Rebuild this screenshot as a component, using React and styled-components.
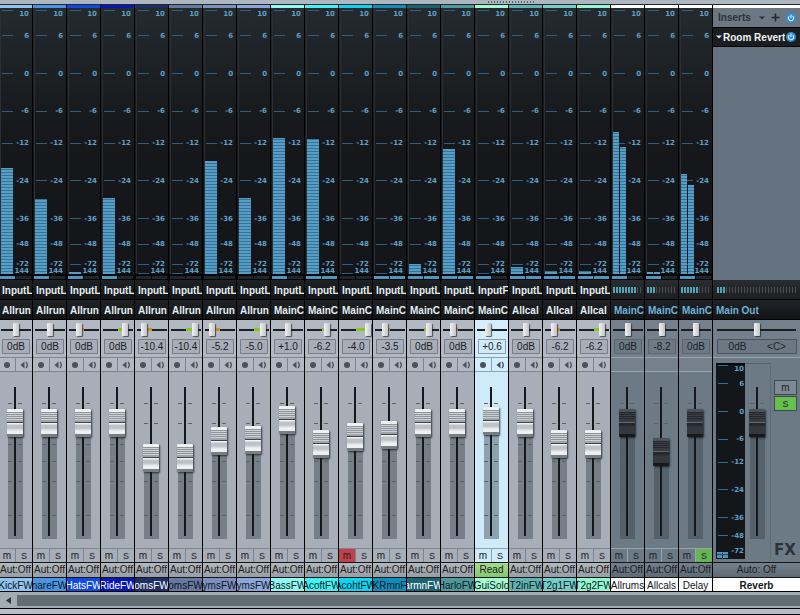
import { useState } from "react";
import styled, { createGlobalStyle, css } from "styled-components";

const METER_MARKS = [
  ["10", 2, 8],
  ["6", 27, 30],
  ["0", 65, 68],
  ["-6", 103, 105],
  ["-12", 135, 137],
  ["-24", 172, 175],
  ["-36", 210, 213],
  ["-48", 236, 238],
  ["-72", 256, 258],
  ["144", 265, 265],
];

const MASTER_MARKS = [
  ["10", 2, 8],
  ["6", 20, 23],
  ["0", 48, 51],
  ["-6", 76, 78],
  ["-12", 99, 101],
  ["-24", 126, 129],
  ["-36", 154, 157],
  ["-48", 172, 175],
  ["-72", 189, 190],
];

// bars: meter heights in pixels, io: lit halves of the input indicator,
// level: fader travel from the bottom, pan: -12 (left) to 12 (right)
const CHANNELS = [
  { name: "KickFW", color: "#93c3f0", input: "InputL", output: "Allrun", db: "0dB", level: 102, pan: 0, bars: [106], io: 1 },
  { name: "nareFW", color: "#4694e6", input: "InputL", output: "Allrun", db: "0dB", level: 102, pan: 0, bars: [75], io: 1 },
  { name: "HatsFW", color: "#0f49e6", ink: "#fff", input: "InputL", output: "Allrun", db: "0dB", level: 102, pan: -5, bars: [2], io: 1 },
  { name: "RideFW", color: "#0717b4", ink: "#fff", input: "InputL", output: "Allrun", db: "0dB", level: 102, pan: 7, bars: [76], io: 1 },
  { name: "omsFW", color: "#1d2f66", ink: "#fff", input: "InputL", output: "Allrun", db: "-10.4", level: 67, pan: -8, bars: [], io: 0 },
  { name: "omsFW", color: "#66799f", input: "InputL", output: "Allrun", db: "-10.4", level: 67, pan: 9, bars: [], io: 0 },
  { name: "ymsFW", color: "#7b90bf", input: "InputL", output: "Allrun", db: "-5.2", level: 84, pan: -8, bars: [113], io: 0 },
  { name: "ymsFW", color: "#8ba6d8", input: "InputL", output: "Allrun", db: "-5.0", level: 85, pan: 9, bars: [76], io: 0 },
  { name: "BassFW", color: "#8dfaf4", input: "InputL", output: "MainC", db: "+1.0", level: 105, pan: 0, bars: [136], io: 1 },
  { name: "AcoftFW", color: "#3cf4f6", input: "InputL", output: "MainC", db: "-6.2", level: 81, pan: 5, bars: [135], io: 2 },
  { name: "AcohtFW", color: "#0bd5f2", input: "InputL", output: "MainC", db: "-4.0", level: 88, pan: 12, bars: [], io: 0, muted: true },
  { name: "KRmnF", color: "#0c8fbd", input: "InputL", output: "MainC", db: "-3.5", level: 90, pan: -5, bars: [], io: 2 },
  { name: "armnFW", color: "#1c6473", ink: "#fff", input: "InputL", output: "MainC", db: "0dB", level: 102, pan: 5, bars: [10], io: 2 },
  { name: "HarloFW", color: "#4d9a9e", input: "InputL", output: "MainC", db: "0dB", level: 102, pan: -5, bars: [125], io: 2 },
  { name: "GuiSolo", color: "#a3fad0", input: "InputF", output: "MainC", db: "+0.6", level: 104, pan: -4, bars: [], io: 1, selected: true },
  { name: "IT2inFW", color: "#5fb3b1", input: "InputL", output: "Allcal", db: "0dB", level: 102, pan: 0, bars: [7], io: 2 },
  { name: "T2g1FW", color: "#73cfc8", input: "InputL", output: "Allcal", db: "-6.2", level: 81, pan: -6, bars: [3], io: 2 },
  { name: "T2g2FW", color: "#92f7d3", input: "InputL", output: "Allcal", db: "-6.2", level: 81, pan: 8, bars: [3], io: 2 },
  { name: "Allrums", color: "#ffffff", fx: true, leds: 8, output: "MainC", db: "0dB", level: 102, pan: 0, bars: [142, 127], io: 1 },
  { name: "Allcals", color: "#ffffff", fx: true, leds: 3, output: "MainC", db: "-8.2", level: 73, pan: 0, bars: [2, 2], io: 1 },
  { name: "Delay", color: "#ffffff", fx: true, leds: 6, output: "MainC", db: "0dB", level: 102, pan: 0, bars: [100, 89], io: 1, soloed: true },
];

const FADER_TICKS = [16, 36, 57, 74, 94, 128];

const tickStops = FADER_TICKS.map(
  (y) => `transparent ${y}px, #59636b ${y}px, #59636b ${y + 1}px, transparent ${y + 1}px`
).join(", ");
const tickImage = `linear-gradient(to bottom, ${tickStops})`;

const Meter = ({ bars, io }) => {
  const width = bars.length > 1 ? 6 : 12;

  return (
    <MeterSvg viewBox="0 0 33 272" width="33" height="272" aria-hidden="true">
      <defs>
        <linearGradient id="glass" x1="0" y1="0" x2="0" y2="1">
          <stop offset="0" stopColor="#242a2e" />
          <stop offset="0.45" stopColor="#16181b" />
          <stop offset="1" stopColor="#131518" />
        </linearGradient>
        <pattern id="segments" width="33" height="3" patternUnits="userSpaceOnUse">
          <rect width="33" height="3" fill="#589dc6" />
          <rect y="2" width="33" height="1" fill="#32739a" />
        </pattern>
      </defs>
      <rect width="33" height="266" fill="url(#glass)" />
      <rect x="1" width="1" height="266" fill="#2b2f33" />
      {METER_MARKS.map(([label, tick, text]) => (
        <g key={label}>
          <rect x="3" y={tick} width="11" height="1" fill="#2f5f80" />
          <MarkText x="30" y={text}>
            {label}
          </MarkText>
        </g>
      ))}
      {bars.map((height, i) => (
        <rect
          key={i}
          x={2 + i * 7}
          y={266 - height}
          width={width}
          height={height}
          fill="url(#segments)"
        />
      ))}
      <rect y="266" width="33" height="6" fill="#050607" />
      <rect x="1" y="268" width="15" height="3" fill={io > 0 ? "#4f95bd" : "#20262b"} />
      <rect x="17" y="268" width="15" height="3" fill={io > 1 ? "#4f95bd" : "#20262b"} />
    </MeterSvg>
  );
};

const MasterMeter = () => (
  <svg viewBox="0 0 29 196" width="29" height="196" aria-hidden="true">
    <rect width="29" height="196" fill="#14171a" />
    <rect width="29" height="2" fill="#050607" />
    {MASTER_MARKS.map(([label, tick, text]) => (
      <g key={label}>
        <rect x="2" y={tick} width="10" height="1" fill="#2f6f96" />
        <MarkText x="28" y={text}>
          {label}
        </MarkText>
      </g>
    ))}
    <rect x="1" y="189" width="5" height="6" fill="#4f95bd" />
    <rect x="7" y="189" width="5" height="6" fill="#4f95bd" />
    <rect x="1" y="191" width="11" height="1" fill="#1b4a66" />
  </svg>
);

const Leds = ({ count, lit }) => (
  <svg width={count * 3} height="6" aria-hidden="true">
    {Array.from({ length: count }, (_, i) => (
      <rect
        key={i}
        x={i * 3}
        width={i < lit ? 2 : 1}
        height="6"
        fill={i < lit ? "#4fa5b8" : "#4b4f52"}
      />
    ))}
  </svg>
);

const SpeakerIcon = () => (
  <svg width="9" height="8" viewBox="0 0 9 8" aria-hidden="true">
    <path d="M0.5 4 L4.5 0.5 V7.5 Z" fill="#4a515a" />
    <path d="M6 1 Q8.6 4 6 7" fill="none" stroke="#4a515a" strokeWidth="1.3" />
  </svg>
);

const PowerIcon = () => (
  <svg width="10" height="10" viewBox="0 0 10 10" aria-hidden="true">
    <circle cx="5" cy="5" r="5" fill="#2f8ed2" />
    <path d="M3.2 3.2 A2.6 2.6 0 1 0 6.8 3.2" fill="none" stroke="#d6efff" strokeWidth="1.1" />
    <path d="M5 1.4 V5" stroke="#d6efff" strokeWidth="1.1" />
  </svg>
);

const ArrowIcon = ({ color }) => (
  <ArrowSvg width="6" height="4" viewBox="0 0 6 4" aria-hidden="true">
    <path d="M0 0.5 H6 L3 3.5 Z" fill={color} />
  </ArrowSvg>
);

const Channel = ({ channel }) => {
  const { name, color, ink, input, output, db, bars, io, fx, leds, selected } = channel;
  const [level, setLevel] = useState(channel.level);
  const [pan, setPan] = useState(channel.pan);
  const [muted, setMuted] = useState(!!channel.muted);
  const [soloed, setSoloed] = useState(!!channel.soloed);

  return (
    <Strip $fx={fx} $selected={selected}>
      <ColorBar $color={color} />
      <Meter bars={bars} io={io} />
      {fx ? (
        <LedRow>
          <Leds count={10} lit={leds} />
        </LedRow>
      ) : (
        <RouteButton type="button">
          <span>{input}</span>
        </RouteButton>
      )}
      <RouteButton type="button" $fx={fx}>
        <span>{output}</span>
      </RouteButton>
      <PanRow>
        <PanSlider
          type="range"
          min="-12"
          max="12"
          value={pan}
          $pan={pan}
          onChange={(e) => setPan(Number(e.target.value))}
          aria-label={`${name} pan`}
        />
      </PanRow>
      <GainRow>
        <GainBox defaultValue={db} aria-label={`${name} gain`} />
      </GainRow>
      <ArmRow>
        {!fx && (
          <>
            <CellButton type="button" aria-label={`Record ${name}`}>
              <RecordDot />
            </CellButton>
            <CellButton type="button" aria-label={`Monitor ${name}`}>
              <SpeakerIcon />
            </CellButton>
          </>
        )}
      </ArmRow>
      <FaderArea>
        <Fader
          type="range"
          min="0"
          max="124"
          value={level}
          $level={level}
          $dark={fx}
          onChange={(e) => setLevel(Number(e.target.value))}
          aria-label={`${name} level`}
        />
      </FaderArea>
      <MuteSoloRow>
        <CellButton type="button" $on={muted && "#c3414a"} onClick={() => setMuted(!muted)}>
          m
        </CellButton>
        <CellButton
          type="button"
          $solo
          $on={soloed && "#65b552"}
          onClick={() => setSoloed(!soloed)}
        >
          S
        </CellButton>
      </MuteSoloRow>
      <AutoButton type="button" $fx={fx} $active={selected}>
        {selected ? "Read" : "Aut:Off"}
      </AutoButton>
      <NameTag $color={color} $ink={ink}>
        <span>{name}</span>
      </NameTag>
    </Strip>
  );
};

const Master = () => {
  const [level, setLevel] = useState(102);
  const [pan, setPan] = useState(0);

  return (
    <MasterPanel>
      <ColorBar $color="#ffffff" />
      <Inserts>
        <InsertsHeader>
          <span>Inserts</span>
          <ArrowIcon color="#2b3138" />
          <IconButton type="button" aria-label="Add insert">
            <svg width="9" height="9" viewBox="0 0 9 9" aria-hidden="true">
              <path d="M4.5 0.5 V8.5 M0.5 4.5 H8.5" stroke="#22282e" strokeWidth="1.6" />
            </svg>
          </IconButton>
          <IconButton type="button" aria-label="Toggle inserts">
            <PowerIcon />
          </IconButton>
        </InsertsHeader>
        <InsertItem>
          <ArrowIcon color="#e4e8eb" />
          <span>Room Revert</span>
          <IconButton type="button" aria-label="Toggle Room Revert">
            <PowerIcon />
          </IconButton>
        </InsertItem>
      </Inserts>
      <LedRow $wide>
        <Leds count={27} lit={3} />
      </LedRow>
      <RouteButton type="button" $fx>
        <span>Main Out</span>
      </RouteButton>
      <PanRow $wide>
        <PanSlider
          type="range"
          min="-12"
          max="12"
          value={pan}
          $pan={pan}
          $wide
          onChange={(e) => setPan(Number(e.target.value))}
          aria-label="Reverb pan"
        />
      </PanRow>
      <GainRow>
        <MasterGain>
          <input defaultValue="0dB" aria-label="Reverb gain" />
          <input defaultValue="&lt;C&gt;" aria-label="Reverb pan position" />
        </MasterGain>
      </GainRow>
      <MasterBody>
        <MasterMeter />
        <MasterFaderWell>
          <Fader
            type="range"
            min="0"
            max="124"
            value={level}
            $level={level}
            $dark
            onChange={(e) => setLevel(Number(e.target.value))}
            aria-label="Reverb level"
          />
        </MasterFaderWell>
        <MasterSide>
          <SideButton type="button">m</SideButton>
          <SideButton type="button" $on>
            S
          </SideButton>
          <FxMark>FX</FxMark>
        </MasterSide>
      </MasterBody>
      <AutoButton type="button" $fx>
        Auto: Off
      </AutoButton>
      <NameTag $color="#ffffff" $bold>
        <span>Reverb</span>
      </NameTag>
    </MasterPanel>
  );
};

const App = () => (
  <>
    <GlobalStyle />
    <TopEdge>
      <Grip />
    </TopEdge>
    <Console>
      {CHANNELS.map((channel, i) => (
        <Channel key={i} channel={channel} />
      ))}
      <Master />
    </Console>
    <ScrollBar>
      <ScrollArrow type="button" aria-label="Scroll left">
        <svg width="5" height="7" viewBox="0 0 5 7" aria-hidden="true">
          <path d="M5 0 V7 L0 3.5 Z" fill="#33383d" />
        </svg>
      </ScrollArrow>
      <ScrollThumb />
    </ScrollBar>
    <BottomEdge />
  </>
);

export default App;

const GlobalStyle = createGlobalStyle`
  * {
    box-sizing: border-box;
  }

  body {
    margin: 0;
    overflow: hidden;
    background: #08090a;
    font-family: "Liberation Sans", Arial, sans-serif;
    font-size: 10px;
    color: #1c2024;
  }

  button,
  input {
    margin: 0;
    padding: 0;
    border: 0;
    border-radius: 0;
    background: none;
    font: inherit;
    color: inherit;
  }
`;

const TopEdge = styled.div`
  display: flex;
  justify-content: center;
  height: 5px;
  padding: 1px 0 0 224px;
  background: #aeb6bf;
  border-bottom: 1px solid #23282d;
`;

const Grip = styled.div`
  width: 48px;
  height: 2px;
  background: repeating-linear-gradient(to right, #59616a 0 1px, transparent 1px 3px);
`;

const Console = styled.main`
  display: flex;
  margin-left: -1px;
`;

const Strip = styled.section`
  --body: #a7aeb8;
  --line: #7d858e;
  --light: #b2b8c1;
  display: flex;
  flex: none;
  flex-direction: column;
  width: 34px;
  border-right: 1px solid #000;
  background: var(--body);

  ${({ $fx }) =>
    $fx &&
    css`
      --body: #6c7a86;
      --line: #98a5b0;
      --light: #74818c;
    `}

  ${({ $selected }) =>
    $selected &&
    css`
      --body: #cfebfa;
      --line: #8ba4b1;
      --light: #d2eefc;
    `}
`;

const ColorBar = styled.div`
  height: 3px;
  background: ${({ $color }) => $color};
`;

const MeterSvg = styled.svg`
  display: block;
`;

const ArrowSvg = styled.svg`
  flex: none;
`;

const MarkText = styled.text`
  font: bold 7px "DejaVu Sans", Verdana, sans-serif;
  text-anchor: end;
  fill: #5f9fc6;
`;

const LedRow = styled.div`
  display: flex;
  align-items: center;
  height: 20px;
  padding-left: ${({ $wide }) => ($wide ? 4 : 2)}px;
  overflow: hidden;
  background: linear-gradient(#2a2d30, #1c1e20);
  border-bottom: 1px solid #000;
`;

const RouteButton = styled.button`
  height: 20px;
  padding: 1px 0 0 3px;
  background: linear-gradient(#202326, #121415);
  border-bottom: 1px solid #000;
  color: ${({ $fx }) => ($fx ? "#6fb2d6" : "#e3eef2")};
  font-weight: bold;
  text-align: left;

  span {
    display: block;
    overflow: hidden;
    white-space: nowrap;
  }
`;

const PanRow = styled.div`
  display: flex;
  align-items: center;
  height: 19px;
  padding: 0 ${({ $wide }) => ($wide ? "4px 0 4px" : "1px 0 2px")};
  background: var(--light);
`;

const panFill = ({ $pan }) => {
  if ($pan === 0) return "transparent 0 0";
  const edge = 50 + ($pan / 12) * 40;
  return $pan > 0
    ? `transparent 50%, #86c81c 50% ${edge}%, transparent ${edge}%`
    : `transparent ${edge}%, #c8912a ${edge}% 50%, transparent 50%`;
};

const PanSlider = styled.input`
  appearance: none;
  width: ${({ $wide }) => ($wide ? "100%" : "30px")};
  height: 14px;
  background:
    linear-gradient(to right, ${panFill}) center / 100% 3px no-repeat,
    linear-gradient(#1c1f22, #1c1f22) center / 100% 2px no-repeat;

  &::-webkit-slider-thumb {
    appearance: none;
    width: 6px;
    height: 13px;
    border-radius: 1px;
    background: linear-gradient(to right, #f1f2f3, #c0c4c8);
    box-shadow: 1px 1px 1px rgba(30, 34, 40, 0.7);
  }
`;

const GainRow = styled.div`
  height: 19px;
  padding: 0 2px 0 3px;
  background: var(--light);
  border-bottom: 1px solid var(--line);
`;

const GainBox = styled.input`
  display: block;
  width: 100%;
  height: 15px;
  border: 1px solid rgba(70, 80, 90, 0.5);
  border-radius: 1px;
  background: var(--body);
  text-align: center;
`;

const ArmRow = styled.div`
  display: flex;
  height: 14px;
  background: var(--light);
  border-bottom: 1px solid var(--line);
`;

const CellButton = styled.button`
  display: flex;
  flex: 1;
  align-items: center;
  justify-content: center;
  min-width: 0;
  background: ${({ $on }) => $on || "transparent"};
  font-size: ${({ $solo }) => ($solo ? 9 : 10)}px;
  line-height: 10px;

  & + & {
    border-left: 1px solid var(--line);
  }
`;

const RecordDot = styled.span`
  width: 6px;
  height: 6px;
  border-radius: 50%;
  background: #4a515a;
`;

const FaderArea = styled.div`
  height: 176px;
  padding: 15px 0 0 8px;
`;

const lightCap = `linear-gradient(
  #eef0f2 0 3px, #8e959c 3px 4px, #ccd1d6 4px 5px, #8e959c 5px 6px, #ccd1d6 6px 7px,
  #8e959c 7px 8px, #ccd1d6 8px 9px, #8e959c 9px 10px, #ccd1d6 10px 11px, #9fa5ac 11px 13px,
  #3d4349 13px 14px, #f2f4f5 14px 15px, #bcc2c8 16px 19px, #eef0f2 22px 25px, #787e84 25px 28px
)`;

const darkCap = `linear-gradient(
  #4b5157 0 3px, #24282c 3px 4px, #3b4046 4px 5px, #24282c 5px 6px, #3b4046 6px 7px,
  #24282c 7px 8px, #3b4046 8px 9px, #24282c 9px 10px, #363b40 10px 13px,
  #626a71 13px 14px, #24282c 14px 16px, #33383d 18px 25px, #17191c 25px 28px
)`;

const Fader = styled.input`
  appearance: none;
  display: block;
  writing-mode: vertical-lr;
  direction: rtl;
  width: 16px;
  height: 152px;
  background:
    linear-gradient(#15181c, #15181c) 7px 0 / 2px 149px no-repeat,
    ${tickImage} 1px 0 / 4px 100% no-repeat,
    ${tickImage} 11px 0 / 4px 100% no-repeat,
    linear-gradient(rgba(50, 62, 68, 0.42), rgba(50, 62, 68, 0.42)) 1px 100% / 15px
      ${({ $level }) => $level + 14}px no-repeat;

  &::-webkit-slider-thumb {
    appearance: none;
    width: 16px;
    height: 28px;
    border-radius: 1px;
    background: ${({ $dark }) => ($dark ? darkCap : lightCap)};
    box-shadow: 1px 1px 2px rgba(20, 24, 28, 0.8);
  }
`;

const MuteSoloRow = styled.div`
  display: flex;
  height: 15px;
  border-top: 1px solid var(--line);
  border-bottom: 1px solid #14171a;
`;

const autoFill = ({ $active, $fx }) => {
  if ($active) return "#a5dc90, #86c872";
  return $fx ? "#74818c, #5e6a74" : "#b2b7bd, #989ea5";
};

const AutoButton = styled.button`
  height: 15px;
  overflow: hidden;
  background: linear-gradient(${autoFill});
  border-bottom: 1px solid #14171a;
  line-height: 14px;
  white-space: nowrap;
`;

const NameTag = styled.div`
  display: flex;
  justify-content: center;
  height: 14px;
  overflow: hidden;
  background: ${({ $color }) => $color};
  border-bottom: 1px solid #000;
  color: ${({ $ink }) => $ink || "#10161c"};
  font-weight: ${({ $bold }) => ($bold ? "bold" : "normal")};
  line-height: 15px;
  white-space: nowrap;
`;

const MasterPanel = styled.section`
  --body: #6c7a86;
  --line: #98a5b0;
  --light: #74818c;
  display: flex;
  flex: 1;
  flex-direction: column;
  min-width: 0;
  background: var(--body);
`;

const Inserts = styled.div`
  height: 272px;
  background: #64717e;
`;

const InsertsHeader = styled.div`
  display: flex;
  align-items: center;
  gap: 6px;
  height: 20px;
  padding: 0 4px 0 5px;
  background: #6b7884;
  border-bottom: 1px solid #000;
  color: #2b3138;
  font-weight: bold;

  span {
    flex: 1;
  }
`;

const InsertItem = styled.div`
  display: flex;
  align-items: center;
  gap: 1px;
  height: 19px;
  padding: 0 4px 0 3px;
  background: #1b1e21;
  border-bottom: 1px solid #000;
  color: #f0f3f4;
  font-weight: bold;

  span {
    flex: 1;
    overflow: hidden;
    white-space: nowrap;
  }
`;

const IconButton = styled.button`
  display: flex;
  flex: none;
`;

const MasterGain = styled.div`
  display: flex;
  height: 15px;
  margin: 0 1px;
  border: 1px solid rgba(50, 60, 70, 0.6);
  border-radius: 1px;
  background: #6b7884;

  input {
    flex: 1;
    min-width: 0;
    text-align: center;
  }
`;

const MasterBody = styled.div`
  display: flex;
  height: 205px;
  padding: 5px 3px 3px;
  border-bottom: 1px solid #14171a;
`;

const MasterFaderWell = styled.div`
  flex: none;
  width: 26px;
  padding: 23px 0 0 4px;
  border-top: 1px solid #56626c;
  border-right: 1px solid #5f6c77;
`;

const MasterSide = styled.div`
  display: flex;
  flex: 1;
  flex-direction: column;
  gap: 1px;
  padding: 17px 0 0 3px;
`;

const SideButton = styled.button`
  height: 15px;
  border: 1px solid #3f4952;
  background: ${({ $on }) => ($on ? "#68c04c" : "#7d8994")};
  font-size: ${({ $on }) => ($on ? 9 : 10)}px;
  line-height: 10px;
`;

const FxMark = styled.strong`
  margin-top: auto;
  font: bold 15px "DejaVu Sans", Verdana, sans-serif;
  color: #2c343b;
`;

const ScrollBar = styled.div`
  display: flex;
  height: 17px;
  padding: 3px 0 2px;
  background: #a3abb3;
  border-bottom: 1px solid #000;
`;

const ScrollArrow = styled.button`
  display: flex;
  align-items: center;
  justify-content: center;
  width: 17px;
`;

const ScrollThumb = styled.div`
  flex: 1;
  background: #626c73;
`;

const BottomEdge = styled.div`
  height: 5px;
  background: #b9bfc8;
`;
